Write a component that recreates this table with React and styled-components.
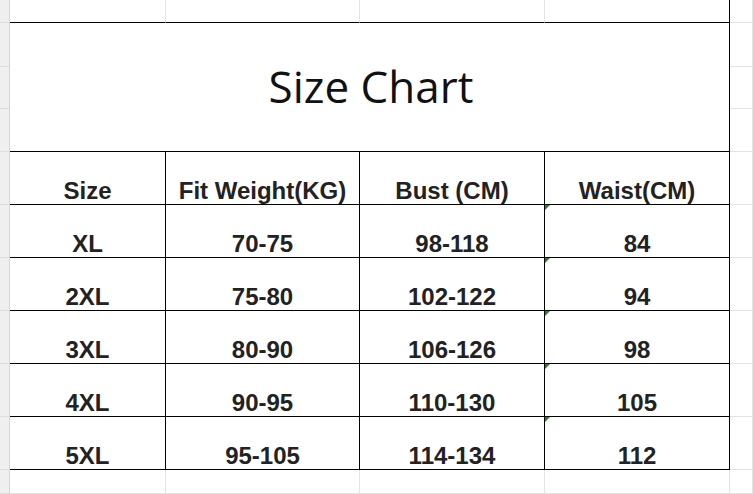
import { Fragment } from 'react';
import styled, { createGlobalStyle } from 'styled-components';

const GlobalStyle = createGlobalStyle`
    html, body {
        margin: 0;
        padding: 0;
        background: #ffffff;
    }
    #root {
        width: 753px;
        height: 494px;
        overflow: hidden;
    }
`;

const Sheet = styled.div`
    display: grid;
    grid-template-columns: 10px 156px 194px 185px 185px 1fr;
    grid-template-rows: 23px 44px 42px 43px repeat(6, 53px) 1fr;
    width: 753px;
    height: 494px;
    background: #ffffff;
    font-family: 'Liberation Sans', Arial, sans-serif;
`;

const RowHead = styled.div`
    box-sizing: border-box;
    background: #efefef;
    border-right: 1px solid #d6d6d6;
    border-bottom: 1px solid #dcdcdc;
`;

const Blank = styled.div`
    box-sizing: border-box;
    border-right: 1px solid ${(p) => (p.$edge ? '#000000' : '#e3e3e3')};
    border-bottom: 1px solid ${(p) => (p.$top ? '#000000' : '#e3e3e3')};
`;

const Title = styled.div`
    grid-column: 2 / 6;
    grid-row: 2 / 5;
    box-sizing: border-box;
    border-right: 1px solid #000000;
    border-bottom: 1px solid #000000;
    display: flex;
    align-items: center;
    justify-content: center;
    padding-left: 3px;
    padding-bottom: 3px;
    font-family: 'Open Sans', 'Noto Sans', sans-serif;
    font-size: 44px;
    font-weight: 400;
    color: #111111;
`;

const Cell = styled.div`
    position: relative;
    box-sizing: border-box;
    border-right: 1px solid #000000;
    border-bottom: 1px solid #000000;
    display: flex;
    align-items: flex-end;
    justify-content: center;
    padding-bottom: 0;
    font-size: 24px;
    line-height: 26px;
    font-weight: 700;
    color: #222222;
    white-space: nowrap;
`;

const Marker = styled.span`
    position: absolute;
    left: 0;
    top: 0;
    width: 0;
    height: 0;
    border-top: 5px solid #2f7d32;
    border-right: 5px solid transparent;
`;

const headers = ['Size', 'Fit Weight(KG)', 'Bust (CM)', 'Waist(CM)'];

const rows = [
    ['XL', '70-75', '98-118', '84'],
    ['2XL', '75-80', '102-122', '94'],
    ['3XL', '80-90', '106-126', '98'],
    ['4XL', '90-95', '110-130', '105'],
    ['5XL', '95-105', '114-134', '112'],
];

const App = () => {
    return (
        <>
            <GlobalStyle />
            <Sheet>
                {/* top row above the chart */}
                <RowHead />
                <Blank $top />
                <Blank $top />
                <Blank $top />
                <Blank $top $edge />
                <Blank />

                {/* merged title rows */}
                <RowHead style={{ gridRow: 2 }} />
                <RowHead style={{ gridRow: 3 }} />
                <RowHead style={{ gridRow: 4 }} />
                <Title>Size Chart</Title>
                <Blank style={{ gridColumn: 6, gridRow: 2 }} />
                <Blank style={{ gridColumn: 6, gridRow: 3 }} />
                <Blank style={{ gridColumn: 6, gridRow: 4 }} />

                <RowHead />
                {headers.map((h) => (
                    <Cell key={h}>{h}</Cell>
                ))}
                <Blank />

                {rows.map((row) => (
                    <Fragment key={row[0]}>
                        <RowHead />
                        {row.map((v, i) => (
                            <Cell key={i}>
                                {i === 3 && <Marker />}
                                {v}
                            </Cell>
                        ))}
                        <Blank />
                    </Fragment>
                ))}

                {/* empty row below */}
                <RowHead />
                <Blank />
                <Blank />
                <Blank />
                <Blank />
                <Blank />
            </Sheet>
        </>
    );
};

export default App;
